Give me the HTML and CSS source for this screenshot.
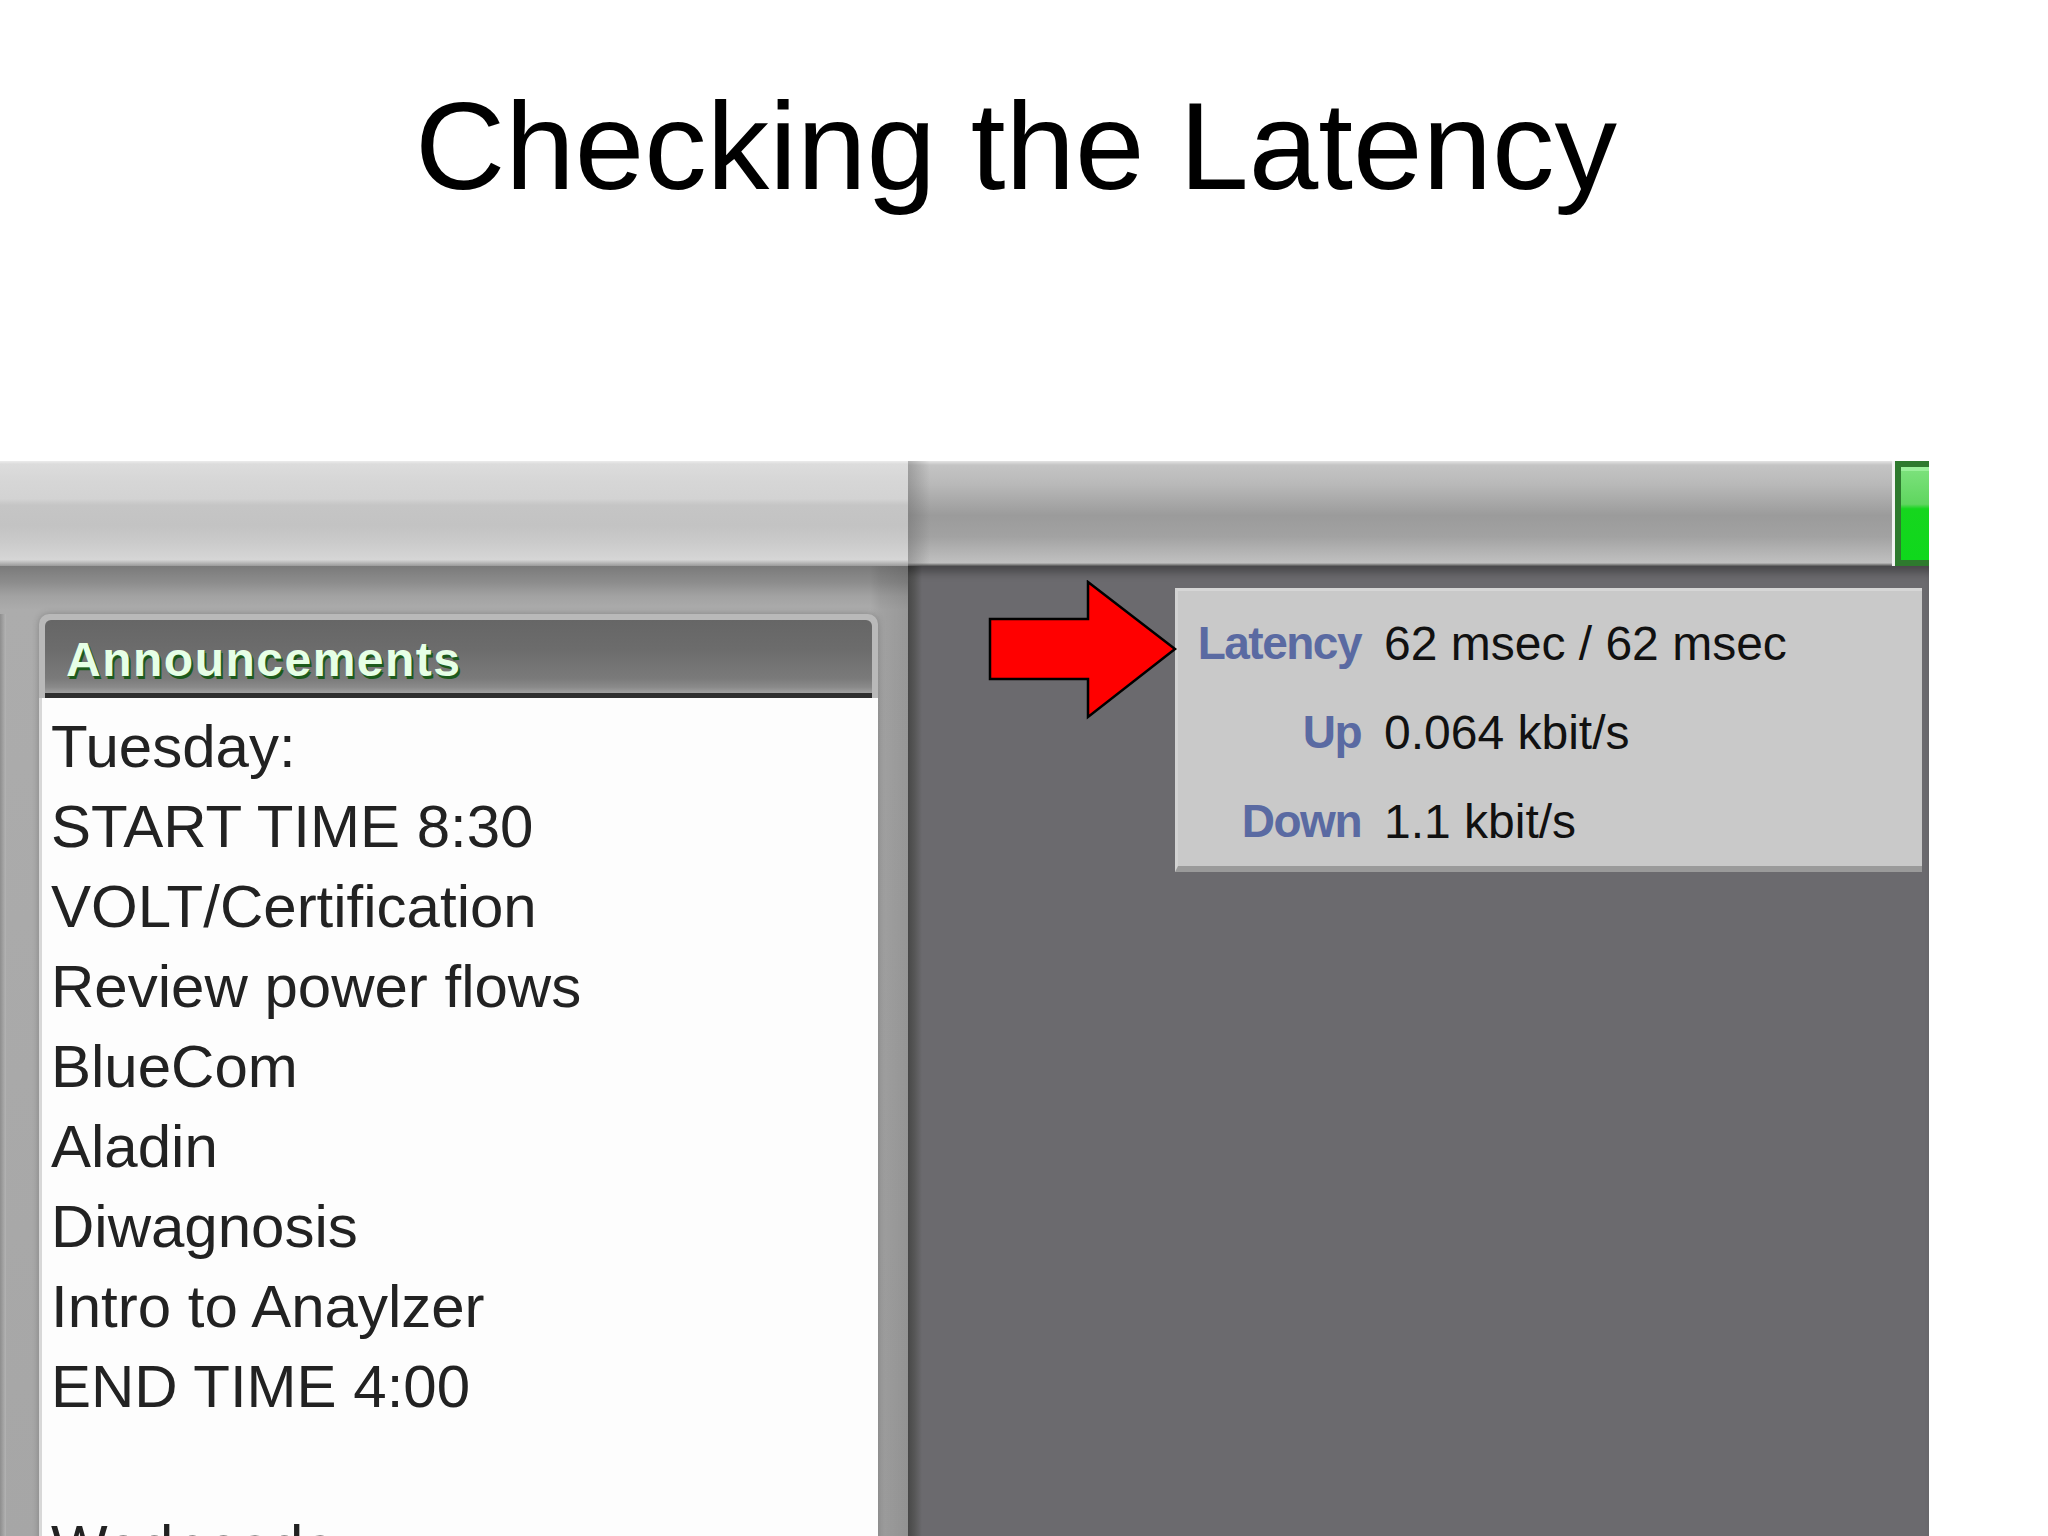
FILE: index.html
```html
<!DOCTYPE html>
<html>
<head>
<meta charset="utf-8">
<link rel="stylesheet" href="styles.css">
</head>
<body>
<div class="slide">
  <h1 class="title">Checking the Latency</h1>
  <div class="shot">
    <div class="topbar">
      <div class="tb-left"></div>
      <div class="tb-right"></div>
      <div class="tb-green"><div class="tb-green-hi"></div></div>
    </div>
    <div class="main">
      <div class="left-col">
        <div class="edge"></div>
        <div class="panel">
          <div class="panel-head"><span class="panel-title">Announcements</span></div>
          <div class="panel-body">
            <div class="line">Tuesday:</div>
            <div class="line">START TIME 8:30</div>
            <div class="line">VOLT/Certification</div>
            <div class="line">Review power flows</div>
            <div class="line">BlueCom</div>
            <div class="line">Aladin</div>
            <div class="line">Diwagnosis</div>
            <div class="line">Intro to Anaylzer</div>
            <div class="line">END TIME 4:00</div>
            <div class="line">&nbsp;</div>
            <div class="line">Wednesday:</div>
          </div>
        </div>
      </div>
      <div class="right-col">
        <div class="stats">
          <div class="lbl">Latency</div><div class="val">62 msec / 62 msec</div>
          <div class="lbl">Up</div><div class="val">0.064 kbit/s</div>
          <div class="lbl">Down</div><div class="val">1.1 kbit/s</div>
        </div>
      </div>
    </div>
    <svg class="arrow" width="190" height="140" viewBox="0 0 190 140">
      <path d="M2 39 L100 39 L100 2 L187 69 L100 137 L100 99 L2 99 Z" fill="#ff0000" stroke="#000" stroke-width="2.5" stroke-linejoin="miter"/>
    </svg>
  </div>
</div>
</body>
</html>
```

FILE: styles.css
```css
html, body {
  margin: 0;
  padding: 0;
  background: #ffffff;
}
body {
  width: 2048px;
  height: 1536px;
  overflow: hidden;
}
.slide {
  width: 2048px;
  height: 1536px;
  display: flex;
  flex-direction: column;
}
.title {
  margin: 0;
  height: 461px;
  box-sizing: border-box;
  padding: 83px 16px 0 0;
  font-family: "Liberation Sans", Arial, sans-serif;
  font-weight: normal;
  font-size: 125px;
  line-height: 1;
  color: #000;
  text-align: center;
}
.shot {
  position: relative;
  width: 1929px;
  flex: 1;
  display: flex;
  flex-direction: column;
  overflow: hidden;
}
.topbar {
  height: 105px;
  display: flex;
  flex-shrink: 0;
}
.tb-left {
  width: 908px;
  background: linear-gradient(to bottom, #ececec 0, #dcdcdc 3px, #d6d6d6 20%, #d3d3d3 36%, #c5c5c5 42%, #c3c3c3 62%, #cbcbcb 78%, #d6d6d6 94%, #9a9a9a 100%);
}
.tb-right {
  flex: 1;
  background:
    linear-gradient(to right, rgba(90,90,90,0.35) 0, rgba(90,90,90,0) 22px),
    linear-gradient(to bottom, #e4e4e4 0, #c4c4c4 4px, #b9b9b9 22%, #a9a9a9 38%, #9b9b9b 52%, #a2a2a2 72%, #b8b8b8 90%, #c0c0c0 97%, #555 100%);
  border-right: 3px solid #f2f2f2;
}
.tb-green {
  width: 34px;
  box-sizing: border-box;
  border: 6px solid #2e7a2e;
  border-right: none;
  background: linear-gradient(to bottom, #7ee27e 0, #5fd65f 40%, #16d61e 45%, #0fd81c 100%);
}
.tb-green-hi {
  height: 4px;
  background: #9af09a;
}
.main {
  flex: 1;
  display: flex;
}
.left-col {
  width: 908px;
  display: flex;
  align-items: flex-start;
  padding-top: 48px;
  box-sizing: border-box;
  background:
    linear-gradient(to right, rgba(0,0,0,0) 0, rgba(0,0,0,0) 870px, rgba(0,0,0,0.06) 880px, rgba(0,0,0,0.12) 908px),
    linear-gradient(to bottom, #7a7a7a 0, #8c8c8c 16px, #a2a2a2 30px, #acacac 44px, #a6a6a6 100%);
}
.edge {
  width: 6px;
  align-self: stretch;
  background: linear-gradient(to right, #8e8e8e, #b4b4b4);
  margin-right: 33px;
}
.panel {
  width: 839px;
  height: 930px;
  box-sizing: border-box;
  border: 4px solid #b9b9b9;
  border-bottom: none;
  border-radius: 10px 10px 0 0;
  background: #b9b9b9;
  box-shadow: 0 0 6px rgba(60,60,60,0.35);
  display: flex;
  flex-direction: column;
}
.panel-head {
  height: 78px;
  flex-shrink: 0;
  box-sizing: border-box;
  margin: 2px 2px 0 2px;
  padding: 15px 0 0 21px;
  border-radius: 6px 6px 0 0;
  background: linear-gradient(to bottom, #666 0, #6c6c6c 40%, #7a7a7a 80%, #8a8a8a 92%, #a0a0a0 100%);
  border-bottom: 5px solid #2e2e2e;
}
.panel-title {
  font-family: "Liberation Sans", Arial, sans-serif;
  font-weight: bold;
  font-size: 48px;
  line-height: 50px;
  letter-spacing: 1.5px;
  color: #e6ffe6;
  text-shadow: 2px 3px 0 #1c5a1c, 1px 1px 0 #2a7a2a;
}
.panel-body {
  flex: 1;
  background: #fdfdfd;
  margin: 0 -4px;
  padding: 9px 0 0 9px;
  border-left: 3px solid #d8d8d8;
}
.line {
  font-family: "Liberation Sans", Arial, sans-serif;
  font-size: 60px;
  line-height: 80px;
  color: #222;
  white-space: nowrap;
}
.right-col {
  flex: 1;
  background:
    linear-gradient(to right, #4a4a4a 0, #555 6px, #6b6a6e 14px),
    #6b6a6e;
  position: relative;
  padding: 22px 7px 0 267px;
  box-sizing: border-box;
  box-shadow: inset 0 12px 10px -6px rgba(0,0,0,0.35);
}
.stats {
  width: 747px;
  height: 284px;
  box-sizing: border-box;
  background: #c9c9c9;
  border-top: 3px solid #d6d6d6;
  border-left: 3px solid #d2d2d2;
  border-bottom: 6px solid #9a9a9a;
  padding: 8px 0 0 0;
  display: grid;
  grid-template-columns: 183px auto;
  grid-auto-rows: 89px;
  column-gap: 23px;
  justify-content: start;
  align-content: start;
}
.lbl {
  font-family: "Liberation Sans", Arial, sans-serif;
  font-weight: bold;
  font-size: 46px;
  line-height: 89px;
  letter-spacing: -1.5px;
  color: #5a6aa2;
  text-align: right;
}
.val {
  font-family: "Liberation Sans", Arial, sans-serif;
  font-size: 48px;
  line-height: 89px;
  color: #111;
  white-space: nowrap;
}
.arrow {
  position: absolute;
  left: 988px;
  top: 119px;
}
```
